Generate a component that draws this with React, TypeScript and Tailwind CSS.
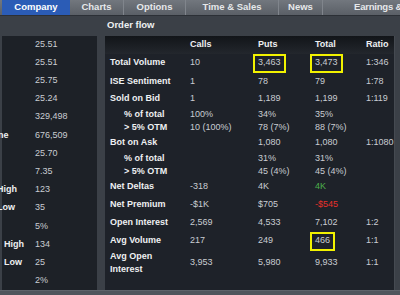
import React from "react";

type Row = {
  label: React.ReactNode;
  h: string;
  indent?: boolean;
  calls?: React.ReactNode;
  puts?: React.ReactNode;
  total?: React.ReactNode;
  ratio?: React.ReactNode;
};

function Boxed({ children }: { children: React.ReactNode }) {
  return (
    <span className="inline-flex items-center h-[19px] -ml-[5px] pl-[3px] pr-[3px] border-2 border-[#f2f200]">
      {children}
    </span>
  );
}

const rows: Row[] = [
  { label: "Total Volume", h: "h-[19px]", calls: "10", puts: <Boxed>3,463</Boxed>, total: <Boxed>3,473</Boxed>, ratio: "1:346" },
  { label: "ISE Sentiment", h: "h-[18px]", calls: "1", puts: "78", total: "79", ratio: "1:78" },
  { label: "Sold on Bid", h: "h-[17px]", calls: "1", puts: "1,189", total: "1,199", ratio: "1:119" },
  { label: "% of total", h: "h-[13px]", indent: true, calls: "100%", puts: "34%", total: "35%" },
  { label: "> 5% OTM", h: "h-[13px]", indent: true, calls: "10 (100%)", puts: "78 (7%)", total: "88 (7%)" },
  { label: "Bot on Ask", h: "h-[18px]", puts: "1,080", total: "1,080", ratio: "1:1080" },
  { label: "% of total", h: "h-[13px]", indent: true, puts: "31%", total: "31%" },
  { label: "> 5% OTM", h: "h-[13px]", indent: true, puts: "45 (4%)", total: "45 (4%)" },
  { label: "Net Deltas", h: "h-[18px]", calls: "-318", puts: "4K", total: <span className="text-[#4caf4c]">4K</span> },
  { label: "Net Premium", h: "h-[18px]", calls: "-$1K", puts: "$705", total: <span className="text-[#e8312b]">-$545</span> },
  { label: "Open Interest", h: "h-[18px]", calls: "2,569", puts: "4,533", total: "7,102", ratio: "1:2" },
  { label: "Avg Volume", h: "h-[18px]", calls: "217", puts: "249", total: <Boxed>466</Boxed>, ratio: "1:1" },
  {
    label: (
      <span className="leading-[11px]">
        Avg Open
        <br />
        Interest
      </span>
    ),
    h: "h-[26px]",
    calls: "3,953",
    puts: "5,980",
    total: "9,933",
    ratio: "1:1",
  },
];

const left: { v: string; label?: string; ml?: string }[] = [
  { v: "25.51" },
  { v: "25.51" },
  { v: "25.75" },
  { v: "25.24" },
  { v: "329,498" },
  { v: "676,509", label: "ne", ml: "-ml-[4px]" },
  { v: "25.70" },
  { v: "7.35" },
  { v: "123", label: "High", ml: "-ml-[5px]" },
  { v: "35", label: "Low", ml: "-ml-[5px]" },
  { v: "5%" },
  { v: "134", label: "High", ml: "ml-[2px]" },
  { v: "25", label: "Low", ml: "ml-[2px]" },
  { v: "2%" },
];

const tabs = [
  { name: "Company", w: "w-[68px]", active: true },
  { name: "Charts", w: "w-[54px]" },
  { name: "Options", w: "w-[62px]" },
  { name: "Time & Sales", w: "w-[93px]" },
  { name: "News", w: "w-[44px]" },
];

export default function App() {
  return (
    <div className="w-[400px] h-[295px] overflow-hidden bg-[#3b4047] flex flex-col font-['Liberation_Sans',Arial,sans-serif] text-[9px] text-[#c9cdd2]">
      <div className="h-[16px] flex pl-[2px] bg-gradient-to-b from-[#72777e] to-[#5b6067] border-b border-[#2c3036] font-bold text-[9.5px] text-[#e6e8ea]">
        {tabs.map((t) => (
          <div
            key={t.name}
            className={`${t.w} flex items-center justify-center border-r border-[#80858c] ${
              t.active ? "bg-[#2b5cb6] text-white border-r-0" : ""
            }`}
          >
            {t.name}
          </div>
        ))}
        <div className="flex-1 flex items-center pl-[31px] tracking-[-0.2px] whitespace-nowrap overflow-hidden">
          Earnings &amp; Estimates
        </div>
      </div>

      <div className="flex-1 flex flex-col">
        <div className="h-[20px] flex items-center pl-[107px] font-bold text-[9.5px] text-[#eef0f2]">Order flow</div>

        <div className="flex-1 flex pl-[2px] pr-[5px] gap-[8px]">
          <div className="w-[95px] bg-[#1d2127] flex flex-col">
            {left.map((r, i) => (
              <div key={i} className={`${i === 0 ? "h-[18px]" : "h-[18.2px]"} flex items-center relative`}>
                {r.label && (
                  <span className={`absolute left-0 ${r.ml} font-bold text-[#eef0f2]`}>{r.label}</span>
                )}
                <span className="ml-[33px]">{r.v}</span>
              </div>
            ))}
          </div>

          <div className="flex-1 bg-[#1e2229] border-r border-[#454a51] flex flex-col">
            <div className="h-[18px] grid grid-cols-[85px_68px_57px_51px_1fr] items-center bg-gradient-to-b from-[#121519] to-[#23272d] font-bold text-[#eef0f2]">
              <span />
              <span>Calls</span>
              <span>Puts</span>
              <span>Total</span>
              <span>Ratio</span>
            </div>
            {rows.map((r, i) => (
              <div key={i} className={`${r.h} grid grid-cols-[85px_68px_57px_51px_1fr] items-center`}>
                <span className={`font-bold text-[#eef0f2] ${r.indent ? "pl-[19px]" : "pl-[5px]"}`}>{r.label}</span>
                <span>{r.calls}</span>
                <span>{r.puts}</span>
                <span>{r.total}</span>
                <span>{r.ratio}</span>
              </div>
            ))}
          </div>
        </div>

        <div className="h-[5px] bg-[#50555c] border-t border-[#5e636a]" />
      </div>
    </div>
  );
}
